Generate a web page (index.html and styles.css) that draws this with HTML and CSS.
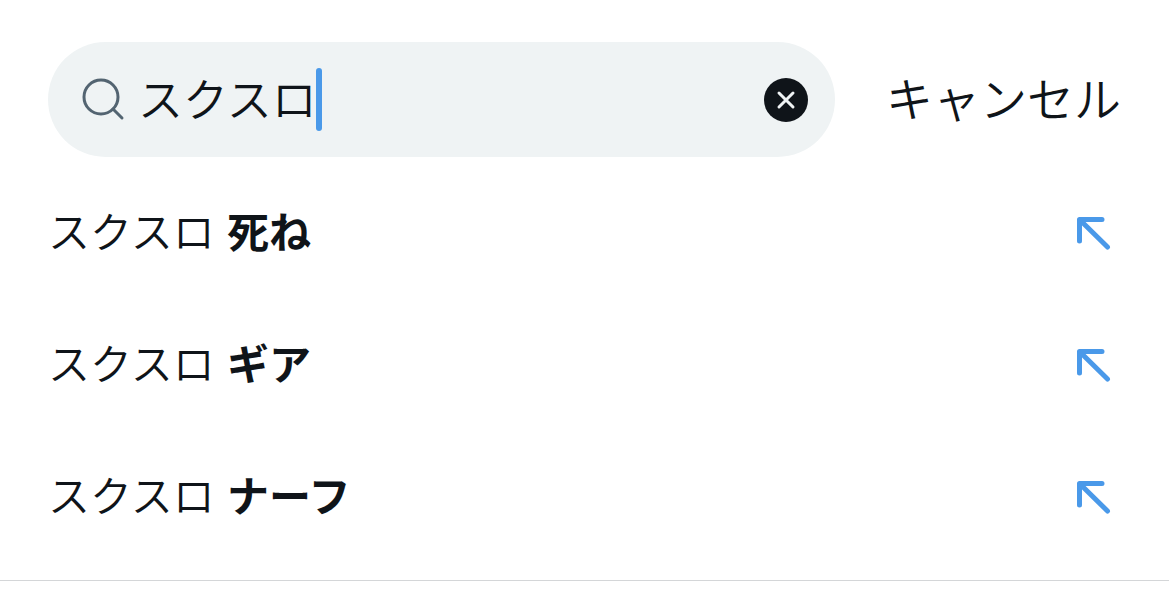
FILE: index.html
```html
<!DOCTYPE html>
<html lang="ja">
<head>
<meta charset="utf-8">
<meta name="viewport" content="width=device-width, initial-scale=1">
<title>検索</title>
<link rel="stylesheet" href="styles.css">
</head>
<body>
<main class="search">
  <form class="search-bar" role="search">
    <div class="field">
      <svg class="field-icon" viewBox="0 0 44 44" aria-hidden="true"><circle cx="20" cy="19" r="17"/><path d="M32 31l9 9"/></svg>
      <div class="entry">
        <input class="entry-input" type="text" value="スクスロ" aria-label="検索キーワード" autocomplete="off">
        <span class="caret"></span>
      </div>
      <button class="clear" type="button" aria-label="クリア">
        <svg class="clear-icon" viewBox="0 0 44 44" aria-hidden="true"><path d="M15 15l14 14M29 15L15 29"/></svg>
      </button>
    </div>
    <button class="cancel" type="button">キャンセル</button>
  </form>
  <ul class="suggestions">
    <li class="suggestion">
      <a class="term" href="#">スクスロ <b>死ね</b></a>
      <button class="fill" type="button" aria-label="入力欄に挿入"><svg class="fill-icon" viewBox="0 0 36 36" aria-hidden="true"><path d="M3.500 27V5.500H26M4 6l27.500 27"/></svg></button>
    </li>
    <li class="suggestion">
      <a class="term" href="#">スクスロ <b>ギア</b></a>
      <button class="fill" type="button" aria-label="入力欄に挿入"><svg class="fill-icon" viewBox="0 0 36 36" aria-hidden="true"><path d="M3.500 27V5.500H26M4 6l27.500 27"/></svg></button>
    </li>
    <li class="suggestion">
      <a class="term" href="#">スクスロ <b>ナーフ</b></a>
      <button class="fill" type="button" aria-label="入力欄に挿入"><svg class="fill-icon" viewBox="0 0 36 36" aria-hidden="true"><path d="M3.500 27V5.500H26M4 6l27.500 27"/></svg></button>
    </li>
  </ul>
</main>
</body>
</html>
```
FILE: styles.css
```css
* {
  box-sizing: border-box;
}

body {
  margin: 0;
  background: #fff;
  color: #0f1419;
  font-family: "Noto Sans CJK JP", sans-serif;
}

button {
  padding: 0;
  border: 0;
  background: none;
  color: inherit;
  font: inherit;
}

svg {
  display: block;
  fill: none;
  stroke-linecap: round;
}

.search {
  border-bottom: 1px solid #d4d6d8;
  padding-bottom: 18px;
}

.search-bar {
  display: flex;
  align-items: center;
  gap: 51px;
  padding: 42px 48px 9px;
}

.field {
  display: flex;
  flex: 1;
  align-items: center;
  min-width: 0;
  height: 115px;
  padding: 0 27px 0 33px;
  border-radius: 58px;
  background: #eff3f4;
}

.field-icon {
  flex: none;
  width: 44px;
  height: 44px;
  margin-right: 13px;
  stroke: #536471;
  stroke-width: 3;
}

.entry {
  position: relative;
  flex: 1;
  min-width: 0;
  font-size: 45px;
}

.entry-input {
  display: block;
  width: 100%;
  height: 64px;
  padding: 0 0 4px;
  border: 0;
  outline: 0;
  background: none;
  color: inherit;
  font: inherit;
  font-weight: 350;
  caret-color: transparent;
}

.caret {
  position: absolute;
  top: 0;
  left: 178px;
  width: 6px;
  height: 63px;
  border-radius: 3px;
  background: #4a99e9;
}

.clear {
  flex: none;
  width: 44px;
  height: 44px;
  border-radius: 50%;
  background: #0f1419;
}

.clear-icon {
  stroke: #eff3f4;
  stroke-width: 3;
}

.cancel {
  flex: none;
  padding-bottom: 6px;
  font-size: 47px;
  font-weight: 350;
  line-height: 64px;
}

.suggestions {
  margin: 0;
  padding: 0 57px 0 48px;
  list-style: none;
}

.suggestion {
  display: flex;
  align-items: center;
  justify-content: space-between;
  height: 132px;
}

.term {
  padding-bottom: 4px;
  color: inherit;
  font-size: 42px;
  font-weight: 350;
  line-height: 64px;
  text-decoration: none;
}

.term b {
  margin-left: 3px;
  font-weight: 700;
}

.fill-icon {
  width: 36px;
  height: 36px;
  stroke: #4a99e9;
  stroke-linejoin: round;
  stroke-width: 5;
}
```
